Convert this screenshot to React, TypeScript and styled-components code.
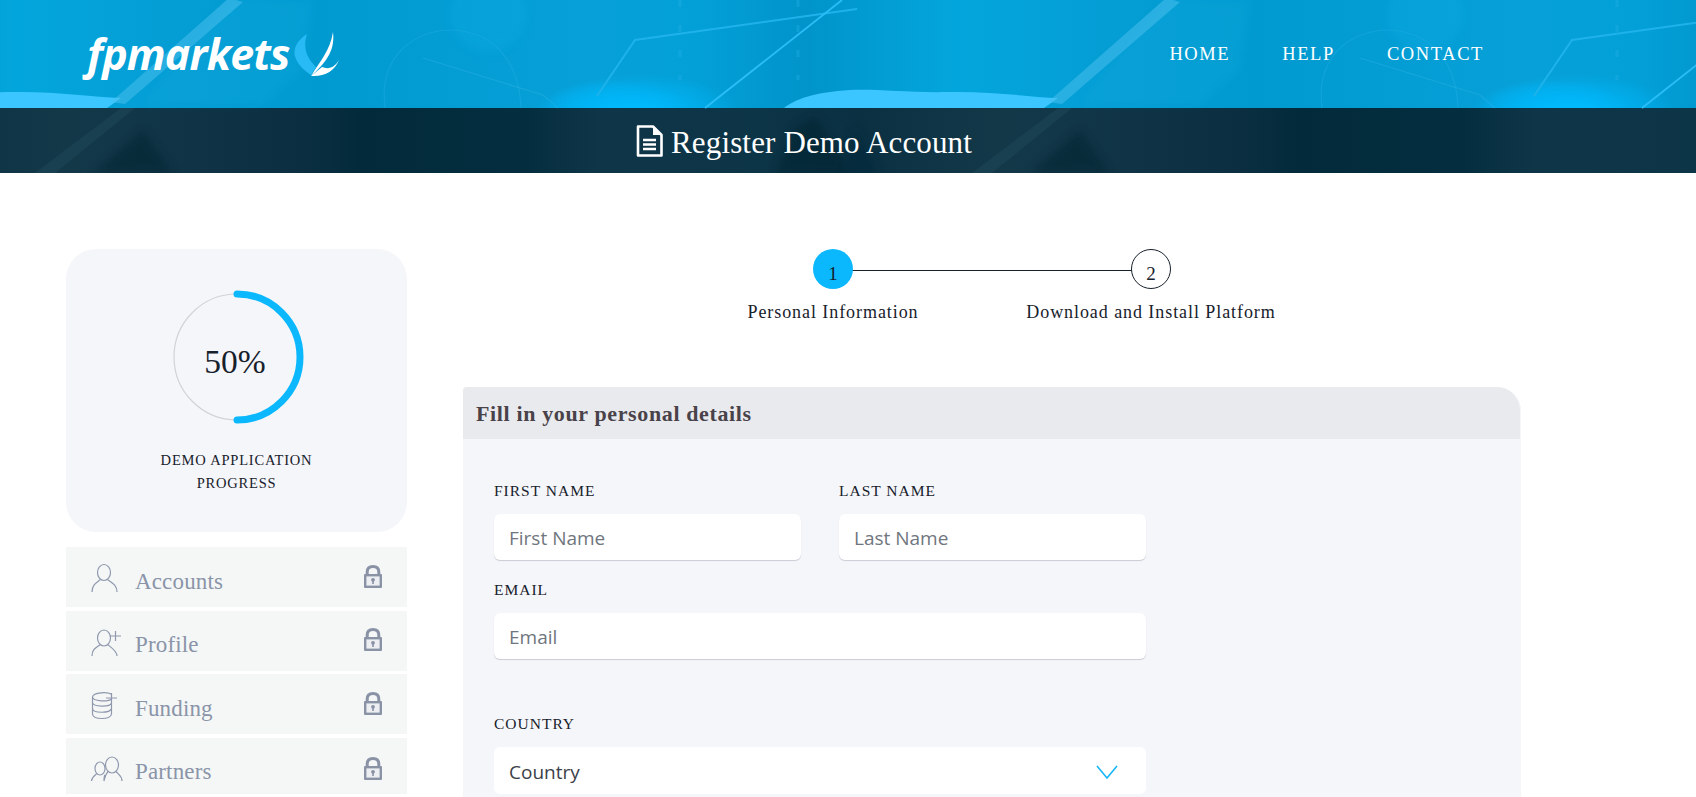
import React from "react";
import styled, { createGlobalStyle } from "styled-components";

const Global = createGlobalStyle`
  html, body { margin: 0; padding: 0; height: 100%; overflow: hidden; background: #fff; }
  body { font-family: "Liberation Serif", "Times New Roman", serif; color: #17212b; }
  * { box-sizing: border-box; }
`;

const Screen = styled.div`
  height: 797px;
  overflow: hidden;
`;
const Masthead = styled.header`
  position: relative;
  height: 173px;
  overflow: hidden;
  background: #009ed6;
`;
const Art = styled.svg`
  position: absolute;
  inset: 0;
  width: 1696px;
  height: 173px;
`;
const TopBar = styled.div`
  position: relative;
  height: 108px;
  display: flex;
  align-items: center;
  padding: 0 212px 0 87px;
`;
const Logo = styled.a`
  display: flex;
  align-items: flex-start;
  color: #fff;
  text-decoration: none;
`;
const LogoWord = styled.span`
  font-family: "Open Sans", sans-serif;
  font-style: italic;
  font-weight: 700;
  font-size: 43px;
  line-height: 50px;
  letter-spacing: -0.9px;
`;
const LogoMark = styled.svg`
  width: 48px;
  height: 48px;
  margin: 2px 0 0 5px;
  flex: none;
`;
const Nav = styled.nav`
  margin-left: auto;
  display: flex;
  gap: 52px;
`;
const NavLink = styled.a`
  color: #fff;
  font-size: 18.5px;
  letter-spacing: 1.6px;
  line-height: 24px;
`;
const TitleBar = styled.div`
  position: relative;
  height: 65px;
  display: flex;
  align-items: center;
  padding-left: 636px;
  gap: 8px;
  color: #fff;
`;
const Title = styled.h1`
  margin: 0;
  padding-top: 5px;
  font-size: 31px;
  font-weight: 400;
  letter-spacing: 0.15px;
  line-height: 40px;
`;
const Content = styled.main`
  display: flex;
  align-items: flex-start;
  gap: 56px;
  padding: 76px 0 0 66px;
`;
const Side = styled.aside`
  width: 341px;
  flex: none;
`;
const ProgressCard = styled.section`
  height: 283px;
  margin-bottom: 15px;
  padding-top: 41px;
  background: #f5f6fa;
  border-radius: 30px;
  display: flex;
  flex-direction: column;
  align-items: center;
`;
const Ring = styled.div`
  position: relative;
  width: 134px;
  height: 134px;
  flex: none;
`;
const RingValue = styled.div`
  position: absolute;
  inset: 0;
  display: flex;
  align-items: center;
  justify-content: center;
  padding: 9px 3px 0 0;
  font-size: 33.5px;
  color: #17212b;
`;
const ProgressLabel = styled.div`
  margin-top: 25px;
  width: 220px;
  text-align: center;
  font-size: 14.5px;
  line-height: 23px;
  letter-spacing: 0.8px;
  color: #17212b;
`;
const MenuList = styled.div`
  display: flex;
  flex-direction: column;
  gap: 3.5px;
`;
const MenuRow = styled.div<{ $h: number; $top?: number }>`
  height: ${(p) => p.$h}px;
  display: flex;
  align-items: center;
  padding: ${(p) => p.$top ?? 0}px 25px 0;
  background: #f5f7f7;
  color: #8a94a8;
`;
const MenuIcon = styled.svg`
  width: 28px;
  height: 30px;
  flex: none;
  margin-top: 2px;
  overflow: visible;
  fill: none;
  stroke: #8f98ad;
  stroke-width: 1.2;
`;
const MenuText = styled.span<{ $pad?: number }>`
  margin-left: 16px;
  padding-top: ${(p) => p.$pad ?? 9}px;
  font-size: 23px;
  letter-spacing: 0.15px;
`;
const LockIcon = styled.svg`
  margin-left: auto;
  margin-top: -2px;
  width: 18px;
  height: 23px;
  flex: none;
`;
const Main = styled.div`
  width: 1058px;
  flex: none;
`;
const Stepper = styled.div`
  height: 138px;
  display: flex;
  justify-content: center;
`;
const Step = styled.div`
  position: relative;
  width: 318px;
  display: flex;
  flex-direction: column;
  align-items: center;
`;
const StepDot = styled.div<{ $active?: boolean }>`
  position: relative;
  z-index: 1;
  width: 40px;
  height: 40px;
  border-radius: 50%;
  display: flex;
  align-items: center;
  justify-content: center;
  padding-top: 9px;
  font-size: 19px;
  background: ${(p) => (p.$active ? "#0bb8fe" : "#fff")};
  border: ${(p) => (p.$active ? "none" : "1px solid #17212b")};
`;
const StepLine = styled.div`
  position: absolute;
  top: 21px;
  left: 50%;
  width: 318px;
  height: 1px;
  background: #17212b;
`;
const StepText = styled.div`
  margin-top: 12px;
  white-space: nowrap;
  font-size: 18px;
  line-height: 22px;
  letter-spacing: 0.93px;
`;
const FormCard = styled.section`
  background: #f5f6fa;
  border-radius: 4px 24px 0 0;
  height: 420px;
`;
const FormHead = styled.div`
  height: 52px;
  display: flex;
  align-items: center;
  padding: 2px 0 0 13px;
  background: #e9eaee;
  border-radius: 4px 24px 0 0;
  border-right: 1px solid #f5f6fa;
`;
const FormTitle = styled.h2`
  margin: 0;
  font-size: 22px;
  font-weight: 700;
  letter-spacing: 0.63px;
  color: #4a4249;
`;
const FormBody = styled.div`
  padding: 42px 0 0 31px;
  width: 683px;
`;
const Row = styled.div`
  display: grid;
  grid-template-columns: 307px 307px;
  column-gap: 38px;
`;
const Field = styled.div<{ $top?: number }>`
  margin-top: ${(p) => p.$top ?? 0}px;
`;
const Label = styled.label`
  display: block;
  height: 20px;
  margin-bottom: 13px;
  font-size: 15.5px;
  line-height: 20px;
  letter-spacing: 1px;
  color: #17212b;
`;
const Input = styled.input`
  display: block;
  width: 100%;
  height: 46px;
  padding: 2px 15px 0;
  border: 0;
  border-radius: 6px;
  background: #fff;
  box-shadow: 0 1px 1px #c9ccd4;
  font-family: "Open Sans", sans-serif;
  font-size: 19px;
  outline: none;
  &::placeholder { color: #6f767e; opacity: 1; }
`;
const Select = styled.div`
  height: 47px;
  display: flex;
  align-items: center;
  justify-content: space-between;
  padding: 2px 28px 0 15px;
  border-radius: 6px;
  background: #fff;
  font-family: "Open Sans", sans-serif;
  font-size: 19px;
  color: #3b4148;
`;
const Chevron = styled.svg`
  width: 22px;
  height: 14px;
  fill: none;
  stroke: #18b6f6;
  stroke-width: 1.6;
`;

const TileBase = () => (
  <g>
    <rect x="600" y="0" width="937" height="108" fill="url(#sky)" />
    <rect x="600" y="108" width="937" height="65" fill="url(#shade)" />
  </g>
);

const TileArt = () => (
  <g>
    <g clipPath="url(#upper)">
      <ellipse cx="640" cy="112" rx="100" ry="38" fill="url(#glow)" />
      <ellipse cx="1550" cy="112" rx="80" ry="32" fill="url(#glow)" />
    </g>
    <circle cx="1425" cy="14" r="38" fill="#0bb0e8" opacity="0.25" filter="url(#soft)" />
    <path d="M1166 0 L1250 0 L1240 70 L1200 104 L1080 104 Z" fill="#18acdf" opacity="0.24" filter="url(#soft)" />
    <path d="M784 108 C795 99 815 92 850 90 C880 89 910 93 950 92 C990 91 1030 97 1058 98 L1044 108 Z" fill="#3bc6ff" />
    <path d="M1166 -2 L1180 2 L1062 104 L1048 102 Z" fill="#48bdec" opacity="0.55" />
    <path d="M597 96 L635 40 L857 9" fill="none" stroke="#1fb2ea" strokeWidth="2" />
    <path d="M705 108 L842 0" fill="none" stroke="#2bbdf6" strokeWidth="1.8" />
    <path d="M680 0 V80 M798 0 V80" fill="none" stroke="#22b0e6" strokeWidth="3" strokeDasharray="7 18" opacity="0.4" />
    <path d="M1322 108 C1316 60 1345 33 1385 30 C1430 30 1456 60 1458 108" fill="none" stroke="#22aee2" strokeWidth="1.2" opacity="0.45" />
    <path d="M1360 58 L1480 95 L1495 108" fill="none" stroke="#27b0e4" strokeWidth="1.3" opacity="0.5" />
    <path d="M775 173 L795 128 L815 116 L850 173 Z" fill="#04202e" opacity="0.55" filter="url(#soft)" />
    <path d="M845 173 L855 128 L878 173 Z" fill="#06283a" opacity="0.5" filter="url(#soft)" />
    <path d="M1058 108 L1072 108 L992 173 L972 173 Z" fill="#1c4252" opacity="0.8" />
    <path d="M1030 173 L1080 130 L1110 173 Z" fill="#04222f" opacity="0.5" filter="url(#soft)" />
  </g>
);

const Lock = () => (
  <LockIcon viewBox="0 0 18 23">
    <path d="M3.2 10 V7 C3.2 3.4 5.6 1.5 9 1.5 C12.4 1.5 14.8 3.4 14.8 7 V10" fill="none" stroke="#8a92a6" strokeWidth="3" />
    <rect x="0" y="9" width="18" height="14" rx="1" fill="#8a92a6" />
    <rect x="2.4" y="11.4" width="13.2" height="9.2" fill="#eceef1" />
    <circle cx="9" cy="14.8" r="1.9" fill="#8a92a6" />
    <rect x="8.2" y="15" width="1.6" height="4" fill="#8a92a6" />
  </LockIcon>
);

export default function App() {
  return (
    <Screen>
      <Global />
      <Masthead>
        <Art viewBox="0 0 1696 173" aria-hidden="true">
          <defs>
            <linearGradient id="sky" gradientUnits="userSpaceOnUse" x1="600" y1="0" x2="1537" y2="0">
              <stop offset="0" stopColor="#07a0d8" />
              <stop offset="0.1" stopColor="#03a0d8" />
              <stop offset="0.22" stopColor="#0094ca" />
              <stop offset="0.38" stopColor="#03a6dc" />
              <stop offset="0.55" stopColor="#049dd4" />
              <stop offset="0.7" stopColor="#009ad0" />
              <stop offset="1" stopColor="#07a0d8" />
            </linearGradient>
            <radialGradient id="glow">
              <stop offset="0" stopColor="#00bcff" />
              <stop offset="0.5" stopColor="#00b6f8" stopOpacity="0.65" />
              <stop offset="1" stopColor="#00b6f8" stopOpacity="0" />
            </radialGradient>
            <linearGradient id="shade" gradientUnits="userSpaceOnUse" x1="600" y1="0" x2="1537" y2="0">
              <stop offset="0" stopColor="#0f3648" />
              <stop offset="0.17" stopColor="#0c3547" />
              <stop offset="0.28" stopColor="#0a3042" />
              <stop offset="0.43" stopColor="#133949" />
              <stop offset="0.49" stopColor="#123748" />
              <stop offset="0.68" stopColor="#0b2f40" />
              <stop offset="0.75" stopColor="#022a3b" />
              <stop offset="0.92" stopColor="#042e3f" />
              <stop offset="1" stopColor="#0f3648" />
            </linearGradient>
            <filter id="soft" x="-30%" y="-30%" width="160%" height="160%">
              <feGaussianBlur stdDeviation="4" />
            </filter>
            <clipPath id="upper">
              <rect x="-1000" y="0" width="4000" height="108" />
            </clipPath>
            <g id="tileBase">
              <TileBase />
            </g>
            <g id="tileArt">
              <TileArt />
            </g>
          </defs>
          {[-937, 0, 937].map((dx) => (
            <use key={dx} href="#tileBase" x={dx} />
          ))}
          {[-937, 0, 937].map((dx) => (
            <use key={dx} href="#tileArt" x={dx} />
          ))}
        </Art>
        <TopBar>
          <Logo>
            <LogoWord>fpmarkets</LogoWord>
            <LogoMark viewBox="294 30 48 48">
              <path d="M307 33 C296 40 292 50 296 58 C299 65 305 70 311 74 L316 66 C308 58 302 48 307 33 Z" fill="#27baf5" />
              <path d="M333 31 C335 48 328 60 311 75 C320 60 330 50 333 31 Z" fill="#fff" />
              <path d="M339 59 C335 70 324 76 311 75 L322 66 C329 69 335 66 339 59 Z" fill="#fff" />
            </LogoMark>
          </Logo>
          <Nav>
            <NavLink>HOME</NavLink>
            <NavLink>HELP</NavLink>
            <NavLink>CONTACT</NavLink>
          </Nav>
        </TopBar>
        <TitleBar>
          <svg width="27" height="32" viewBox="0 0 27 32" fill="none">
            <path d="M2 1.5 H17 L25.5 10 V30.5 H2 Z" stroke="#fff" strokeWidth="2.6" strokeLinejoin="round" />
            <path d="M17 1.5 V10 H25.5 Z" fill="#fff" />
            <path d="M7 15 H20 M7 19.5 H20 M7 24 H20" stroke="#fff" strokeWidth="2.4" />
          </svg>
          <Title>Register Demo Account</Title>
        </TitleBar>
      </Masthead>
      <Content>
        <Side>
          <ProgressCard>
            <Ring>
              <svg width="134" height="134" viewBox="0 0 134 134">
                <circle cx="67" cy="67" r="63" fill="none" stroke="#d2d3d6" strokeWidth="1.2" />
                <path d="M67 4 A63 63 0 0 1 67 130" fill="none" stroke="#0bb8fe" strokeWidth="7" strokeLinecap="round" />
              </svg>
              <RingValue>50%</RingValue>
            </Ring>
            <ProgressLabel>DEMO APPLICATION PROGRESS</ProgressLabel>
          </ProgressCard>
          <MenuList>
            <MenuRow $h={60}>
              <MenuIcon viewBox="0 0 28 30">
                <ellipse cx="13" cy="9.5" rx="6.5" ry="8" />
                <path d="M1 29 C1 22 5 20 9.5 16.5 M26 29 C26 22 21 20 16.5 16.5" />
              </MenuIcon>
              <MenuText>Accounts</MenuText>
              <Lock />
            </MenuRow>
            <MenuRow $h={60}>
              <MenuIcon viewBox="0 0 28 30">
                <ellipse cx="13" cy="11" rx="6.5" ry="8" />
                <path d="M1 29 C1 22 5 21 9.5 17.5 M26 29 C26 24 21 21 16.5 17.5 M19 9 H30 M24.5 4 V14" />
              </MenuIcon>
              <MenuText>Profile</MenuText>
              <Lock />
            </MenuRow>
            <MenuRow $h={60}>
              <MenuIcon viewBox="0 0 28 30">
                <path d="M21 5 C18 1.5 2 2 1.5 7 C2 11.5 17 12 20.5 9 M1.5 7 V24 C2 30 19.5 30 20.5 24 V13 M1.5 12.5 C2 17 19 17.5 20.5 13 M1.5 18.5 C2 23.5 19 23.5 20.5 18.5 M15 8 H26 M20.5 3 V13" />
              </MenuIcon>
              <MenuText>Funding</MenuText>
              <Lock />
            </MenuRow>
            <MenuRow $h={56} $top={8}>
              <MenuIcon viewBox="0 0 28 30">
                <ellipse cx="9" cy="12.5" rx="5" ry="6.5" />
                <ellipse cx="21" cy="9" rx="6.5" ry="8" />
                <path d="M0.5 25 C1 21 3 20 5.5 18 M13 25 C13 23 13 20 14 19 M13 25 C14 21 14 19 17 15.5 M31 25 C31 20 28 19 25 15.5" />
              </MenuIcon>
              <MenuText $pad={5}>Partners</MenuText>
              <Lock />
            </MenuRow>
          </MenuList>
        </Side>
        <Main>
          <Stepper>
            <Step>
              <StepLine />
              <StepDot $active>1</StepDot>
              <StepText>Personal Information</StepText>
            </Step>
            <Step>
              <StepDot>2</StepDot>
              <StepText>Download and Install Platform</StepText>
            </Step>
          </Stepper>
          <FormCard>
            <FormHead>
              <FormTitle>Fill in your personal details</FormTitle>
            </FormHead>
            <FormBody>
              <Row>
                <Field>
                  <Label>FIRST NAME</Label>
                  <Input placeholder="First Name" />
                </Field>
                <Field>
                  <Label>LAST NAME</Label>
                  <Input placeholder="Last Name" />
                </Field>
              </Row>
              <Field $top={20}>
                <Label>EMAIL</Label>
                <Input placeholder="Email" />
              </Field>
              <Field $top={55}>
                <Label>COUNTRY</Label>
                <Select>
                  Country
                  <Chevron viewBox="0 0 22 14">
                    <path d="M1 1 L11 13 L21 1" />
                  </Chevron>
                </Select>
              </Field>
            </FormBody>
          </FormCard>
        </Main>
      </Content>
    </Screen>
  );
}
